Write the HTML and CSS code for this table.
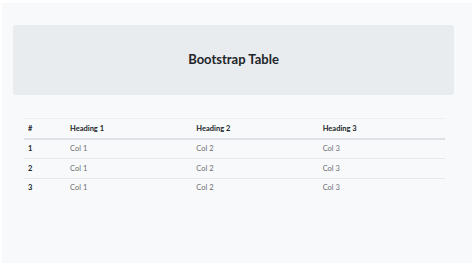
FILE: index.html
```html
<!DOCTYPE html>
<html lang="en">
<head>
  <meta charset="UTF-8" />
  <title>Bootstrap Table</title>
  <meta name="viewport" content="width=device-width, initial-scale=1" />
  <link rel="stylesheet" href="styles.css">
</head>
<body>
  <div class="page">
    <header class="jumbotron">
      <h1>Bootstrap Table</h1>
    </header>

    <main class="table-wrap">
      <table class="table">
        <thead>
          <tr>
            <th class="col-num">#</th>
            <th>Heading 1</th>
            <th>Heading 2</th>
            <th>Heading 3</th>
          </tr>
        </thead>
        <tbody>
          <tr>
            <th class="col-num">1</th>
            <td>Col 1</td>
            <td>Col 2</td>
            <td>Col 3</td>
          </tr>
          <tr>
            <th class="col-num">2</th>
            <td>Col 1</td>
            <td>Col 2</td>
            <td>Col 3</td>
          </tr>
          <tr>
            <th class="col-num">3</th>
            <td>Col 1</td>
            <td>Col 2</td>
            <td>Col 3</td>
          </tr>
        </tbody>
      </table>
    </main>
  </div>
</body>
</html>
```

FILE: styles.css
```css
html, body { margin: 0; padding: 0; background: #fff; }
body {
  font-family: Lato, "Open Sans", sans-serif;
  color: #212529;
  padding: 3px 2px;
}

.page {
  background: #f8f9fa;
  height: 260px;
  padding: 22px 18px 0 11px;
  box-sizing: border-box;
}

.jumbotron {
  background: #e9ecef;
  border-radius: 3px;
  height: 70px;
  display: flex; align-items: center; justify-content: center;
}
.jumbotron h1 {
  margin: 0 0 3px 0;
  font-size: 13px;
  font-weight: 700;
  color: #212529;
}

.table-wrap { padding: 23px 9px 0 11px; }

.table {
  width: 421px;
  border-collapse: collapse;
  table-layout: fixed;
  font-size: 7.5px;
}
.table th, .table td {
  text-align: left;
  padding: 0 4px;
  height: 18.5px;
  border-top: 1px solid #e6e8eb;
  vertical-align: middle;
}
.table thead th {
  border-top: 1px solid #eceef0;
  border-bottom: 2px solid #dee2e6;
  font-weight: 700;
  color: #212529;
}
.table tbody tr:first-child th,
.table tbody tr:first-child td { border-top: none; }
.table td { color: #6c6f73; }
.table tbody th { font-weight: 700; }
.col-num { width: 34px; }
```
